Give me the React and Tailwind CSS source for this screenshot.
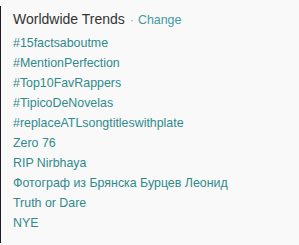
import React from "react";

const trends = [
  "#15factsaboutme",
  "#MentionPerfection",
  "#Top10FavRappers",
  "#TipicoDeNovelas",
  "#replaceATLsongtitleswithplate",
  "Zero 76",
  "RIP Nirbhaya",
  "Фотограф из Брянска Бурцев Леонид",
  "Truth or Dare",
  "NYE",
];

export default function App() {
  return (
    <div
      className="w-[299px] h-[245px] bg-[#f9f9f9] flex overflow-hidden"
      style={{ fontFamily: '"Liberation Sans", Arial, sans-serif' }}
    >
      <div className="w-[1px] mt-[6px] mb-[2px] bg-[#1c1a24]" />
      <div className="flex-1 pl-[12px] pt-[9px]">
        <div className="flex items-baseline h-[20px]">
          <span className="text-[14px] text-[#333333]">Worldwide Trends</span>
          <span className="text-[12.4px] text-[#9aa8aa] ml-[5px]">·</span>
          <span className="text-[12.4px] text-[#3f9aa2] ml-[4px]">Change</span>
        </div>
        <ul className="mt-[4px]">
          {trends.map((t) => (
            <li
              key={t}
              className="h-[20px] leading-[20px] text-[12.4px] text-[#2f8a8c]"
            >
              {t}
            </li>
          ))}
        </ul>
      </div>
    </div>
  );
}
